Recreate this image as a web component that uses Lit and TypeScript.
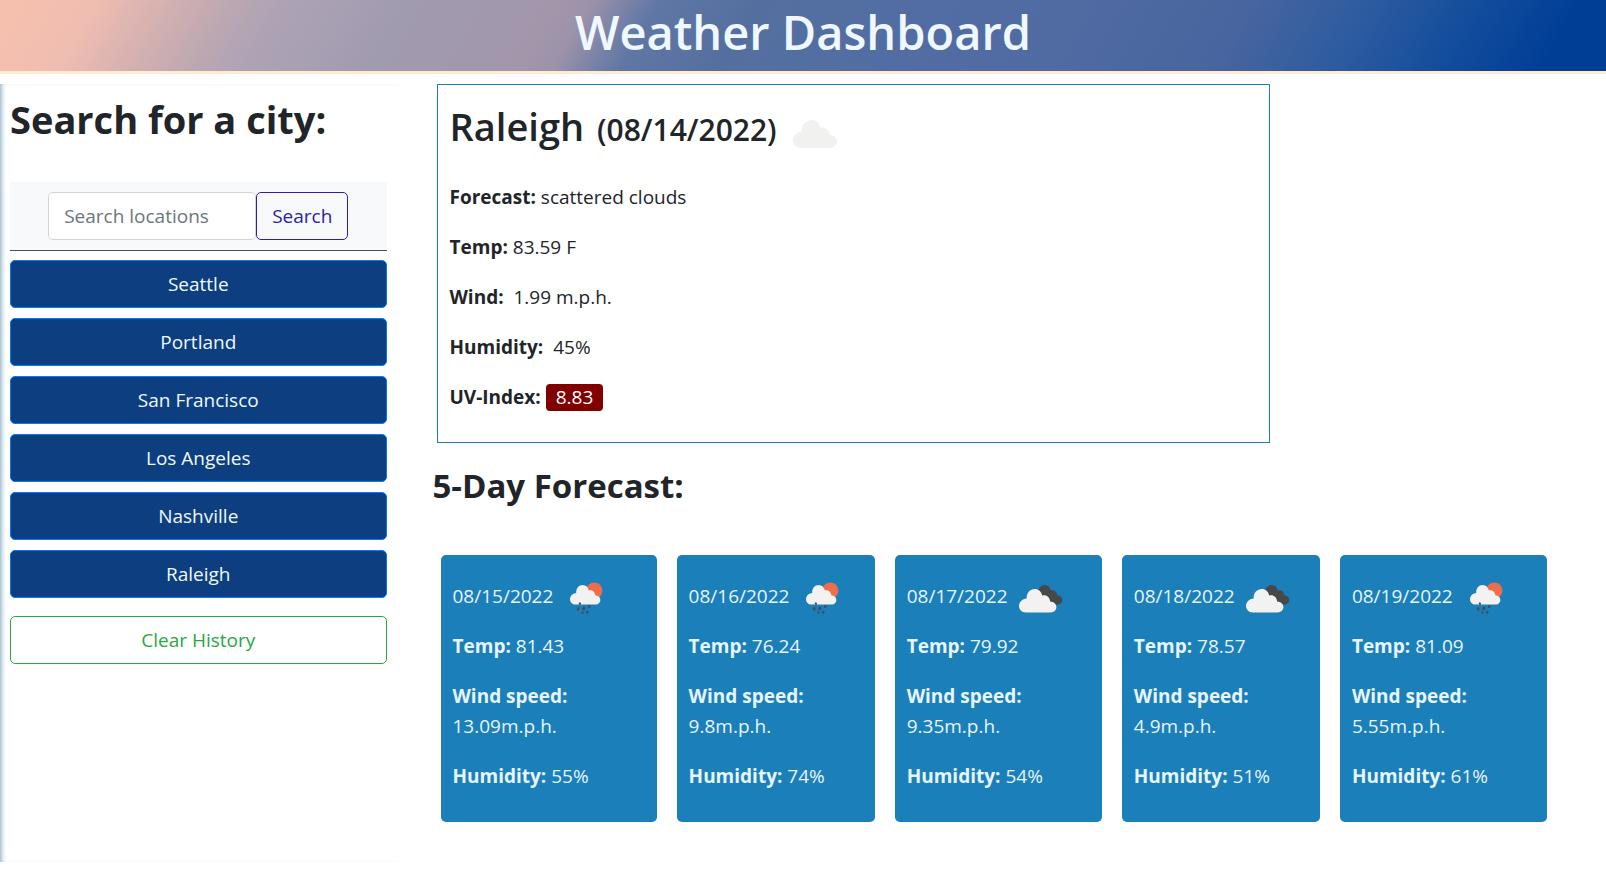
import { LitElement, html, css, svg } from "lit";
import { customElement, property, state } from "lit/decorators.js";

type Sky = "scattered" | "broken" | "rain";

interface Day {
  date: string;
  sky: Sky;
  temp: string;
  wind: string;
  humidity: string;
}

const DAYS: Day[] = [
  { date: "08/15/2022", sky: "rain", temp: "81.43", wind: "13.09", humidity: "55" },
  { date: "08/16/2022", sky: "rain", temp: "76.24", wind: "9.8", humidity: "74" },
  { date: "08/17/2022", sky: "broken", temp: "79.92", wind: "9.35", humidity: "54" },
  { date: "08/18/2022", sky: "broken", temp: "78.57", wind: "4.9", humidity: "51" },
  { date: "08/19/2022", sky: "rain", temp: "81.09", wind: "5.55", humidity: "61" },
];

// Cloud outline, 44 wide by 28 high, flat base.
const CLOUD =
  "M8 28C3.500 28 0 24.700 0 20.300C0 15.600 3.700 11.800 9 11.400C8.600 5 12.800 0 18.500 0C23 0 26.300 3 27.300 7.800C32 6.400 36.300 9.700 36.600 14.800C41 15 44 18 44 21.500C44 25.200 41 28 37.300 28Z";

@customElement("weather-icon")
export class WeatherIcon extends LitElement {
  static styles = css`
    :host {
      display: block;
      flex: none;
      width: 50px;
      height: 50px;
    }
    .icon {
      display: block;
      width: 100%;
      height: 100%;
    }
  `;

  @property() sky: Sky = "scattered";

  private shape() {
    if (this.sky === "rain") {
      return svg`
        <circle cx="34.300" cy="19.600" r="8.100" fill="#ec6e4c" />
        <path transform="translate(10 14) scale(0.690 0.700)" d=${CLOUD} fill="#f2f2f2" />
        <path
          d="M20.200 31.600l-.7 2M18.800 36.400l-1.200 3M24.400 36l-1.300 3M29.700 34.400l-.9 2.200M22.900 40.600l-.8 1.800M27.800 40l-1 2.400"
          stroke="#48484a" stroke-width="2" fill="none" />`;
    }
    if (this.sky === "broken") {
      return svg`
        <path transform="translate(17 14) scale(0.690 0.700)" d=${CLOUD} fill="#48484a" />
        <path transform="translate(4 18) scale(0.850 0.840)" d=${CLOUD} fill="#f2f2f2" />`;
    }
    return svg`<path transform="translate(3 14)" d=${CLOUD} fill="#f1f1f0" />`;
  }

  render() {
    return html`<svg class="icon" viewBox="0 0 50 50" aria-hidden="true">${this.shape()}</svg>`;
  }
}

@customElement("app-root")
export class AppRoot extends LitElement {
  static styles = css`
    :host {
      display: block;
      font: 400 19px/30px "Segoe UI", "Open Sans", "Noto Sans", sans-serif;
      color: #212529;
    }
    * {
      box-sizing: border-box;
    }
    h1,
    h2,
    h3,
    p {
      margin: 0;
    }
    b {
      font-weight: 700;
    }
    .banner {
      padding-bottom: 7px;
      border-bottom: 3px solid #ffebd2;
      background: linear-gradient(
        120deg,
        #f6c0ae 1%,
        #efbdb1 6%,
        #dcb4b1 9%,
        #bda8b1 14%,
        #aea3b5 17%,
        #a19bb0 25%,
        #a296ab 34%,
        #9c92aa 36%,
        #7d84a8 38%,
        #6077a5 40%,
        #546f9f 46%,
        #526da3 56%,
        #506ba2 66%,
        #48659f 76%,
        #2e5ca0 83%,
        #124c9c 90%,
        #003e96 96%
      );
    }
    .title {
      font-size: 47px;
      line-height: 64px;
      font-weight: 600;
      text-align: center;
      color: #f0f8ff;
    }
    .layout {
      display: grid;
      grid-template-columns: 1fr 3fr;
      margin-top: 10px;
    }
    .side {
      margin-right: 5px;
      padding: 11px 10px;
      box-shadow: inset 5px 0 6px -5px #4f86a4;
    }
    .side-title {
      font-size: 38px;
      line-height: 48px;
      font-weight: 700;
    }
    .search {
      display: flex;
      justify-content: center;
      margin-top: 39px;
      padding: 10px;
      border-bottom: 1px solid #495057;
      background: #f8f9fa;
    }
    .field,
    .btn {
      font: inherit;
      height: 48px;
      border: 1px solid;
      border-radius: 5px;
      padding: 0 15px;
    }
    .field {
      width: 208px;
      min-width: 0;
      border-color: #ced4da;
      background: #fff;
      color: #495057;
    }
    .field::placeholder {
      color: #6c757d;
      opacity: 1;
    }
    .btn {
      cursor: pointer;
      background: transparent;
    }
    .go {
      border-color: #2a22a8;
      color: #2a22a8;
    }
    .history {
      display: grid;
      gap: 10px;
      margin: 9px 0 18px;
    }
    .city {
      background: #0d3f80;
      border-color: #007bff;
      color: #f0f8ff;
    }
    .clear {
      width: 100%;
      border-color: #28a745;
      color: #28a745;
    }
    .main {
      min-width: 0;
      padding: 0 59px 40px 31px;
    }
    .today {
      width: calc(75% - 2px);
      margin-left: 4px;
      padding: 21px 12px 30px;
      border: 1px solid #1b7fba;
    }
    .today-head {
      display: flex;
      align-items: flex-start;
      margin-bottom: 26px;
    }
    .today-title {
      font-size: 38px;
      line-height: 40px;
      font-weight: 600;
      margin-right: 13px;
    }
    .today-date {
      font-size: 30px;
      line-height: 30px;
      margin-left: 3px;
    }
    .facts {
      display: grid;
      gap: 20px;
    }
    .uv {
      display: inline-block;
      padding: 0 10px;
      line-height: 27px;
      border-radius: 4px;
      background: #800000;
      color: #fff;
    }
    .next-title {
      margin-top: 22px;
      font-size: 33px;
      line-height: 42px;
      font-weight: 700;
    }
    .cards {
      display: grid;
      grid-template-columns: 216fr 198fr 207fr 198fr 207fr;
      gap: 20px;
      margin: 48px 0 0 8px;
    }
    .card {
      padding: 16px 12px 31px;
      border-radius: 5px;
      background: #1b7fba;
      color: #e6f5ff;
    }
    .card-head {
      display: flex;
      align-items: center;
      gap: 7px;
      margin-bottom: 10px;
    }
  `;

  @state() private cities = [
    "Seattle",
    "Portland",
    "San Francisco",
    "Los Angeles",
    "Nashville",
    "Raleigh",
  ];

  private clearHistory() {
    this.cities = [];
  }

  private card(day: Day) {
    return html`<article class="card">
      <div class="card-head">
        <span>${day.date}</span><weather-icon .sky=${day.sky}></weather-icon>
      </div>
      <div class="facts">
        <p><b>Temp:</b> ${day.temp}</p>
        <p><b>Wind speed:</b> ${day.wind}m.p.h.</p>
        <p><b>Humidity:</b> ${day.humidity}%</p>
      </div>
    </article>`;
  }

  render() {
    return html`
      <header class="banner"><h1 class="title">Weather Dashboard</h1></header>
      <div class="layout">
        <aside class="side">
          <h2 class="side-title">Search for a city:</h2>
          <form class="search" @submit=${(e: Event) => e.preventDefault()}>
            <input class="field" type="text" placeholder="Search locations" aria-label="Search locations" />
            <button class="btn go" type="submit">Search</button>
          </form>
          <div class="history">
            ${this.cities.map((c) => html`<button class="btn city" type="button">${c}</button>`)}
          </div>
          <button class="btn clear" type="button" @click=${this.clearHistory}>Clear History</button>
        </aside>
        <main class="main">
          <section class="today">
            <div class="today-head">
              <h2 class="today-title">Raleigh <span class="today-date">(08/14/2022)</span></h2>
              <weather-icon sky="scattered"></weather-icon>
            </div>
            <div class="facts">
              <p><b>Forecast:</b> scattered clouds</p>
              <p><b>Temp:</b> 83.59 F</p>
              <p><b>Wind:</b> &nbsp;1.99 m.p.h.</p>
              <p><b>Humidity:</b> &nbsp;45%</p>
              <p><b>UV-Index:</b> <span class="uv">8.83</span></p>
            </div>
          </section>
          <h2 class="next-title">5-Day Forecast:</h2>
          <div class="cards">${DAYS.map((d) => this.card(d))}</div>
        </main>
      </div>
    `;
  }
}
